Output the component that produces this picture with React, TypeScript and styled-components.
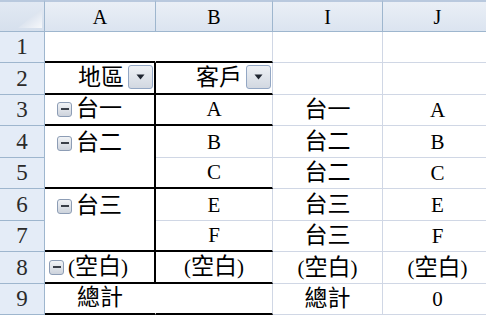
import styled, { createGlobalStyle } from 'styled-components';

const GlobalStyle = createGlobalStyle`
  html, body {
    margin: 0;
    padding: 0;
    background: #ffffff;
    overflow: hidden;
  }
`;

const GRID = '#d0d7e5';
const HEAD_LINE = '#9eb6ce';
const FONT = `'Liberation Serif', 'Noto Sans CJK TC', serif`;

type Line = 'grid' | 'bold' | 'none';

const lineOf = (l: Line) =>
  l === 'bold' ? '2px solid #000000' : l === 'none' ? '1px solid transparent' : `1px solid ${GRID}`;

const Sheet = styled.div`
  display: grid;
  grid-template-columns: 45px 111px 117px 110px 110px;
  grid-template-rows: 32px 31px 32px 31px 32px 31px 32px 31px 32px 31px;
  width: 493px;
  font-family: ${FONT};
  color: #000000;
`;

const Corner = styled.div`
  box-sizing: border-box;
  background: linear-gradient(to bottom, #e2e9f3, #d6e0ed);
  border-top: 2px solid #b9c9de;
  border-right: 1px solid ${HEAD_LINE};
  border-bottom: 1px solid ${HEAD_LINE};
  display: flex;
  justify-content: flex-end;
  align-items: flex-end;
  padding: 0 2px 3px 0;
`;

const ColHead = styled.div`
  box-sizing: border-box;
  background: linear-gradient(to bottom, #eaeff6, #dbe4f0);
  border-top: 2px solid #b9c9de;
  border-right: 1px solid ${HEAD_LINE};
  border-bottom: 1px solid ${HEAD_LINE};
  display: flex;
  align-items: center;
  justify-content: center;
  font-size: 20px;
  padding-top: 1px;
`;

const RowHead = styled.div`
  box-sizing: border-box;
  background: #e4ecf7;
  border-right: 1px solid ${HEAD_LINE};
  border-bottom: 1px solid ${HEAD_LINE};
  display: flex;
  align-items: flex-end;
  justify-content: center;
  font-size: 23px;
  line-height: 24px;
  padding-bottom: 3px;
  color: #2a2a2a;
`;

const Cell = styled.div<{ $align: string; $pl: number; $r: Line; $b: Line; $span: number }>`
  box-sizing: border-box;
  grid-row: span ${(p) => p.$span};
  border-right: ${(p) => lineOf(p.$r)};
  border-bottom: ${(p) => lineOf(p.$b)};
  display: flex;
  justify-content: ${(p) => p.$align};
  align-items: ${(p) => (p.$span > 1 ? 'flex-start' : 'flex-end')};
  padding: ${(p) => (p.$span > 1 ? '5px 0 0' : '0 0 3px')};
  padding-left: ${(p) => p.$pl}px;
  padding-right: ${(p) => (p.$align === 'flex-end' ? 1 : 0)}px;
  font-size: 21px;
  line-height: 24px;
  white-space: nowrap;
  overflow: hidden;
`;

const Label = styled.span`
  display: inline-flex;
  align-items: center;
  gap: 4px;
  height: 24px;
`;

// CJK glyphs in the sheet font fill more of the em box than Noto does
const Han = styled.span`
  font-size: 23px;
`;

const Toggle = styled.span`
  box-sizing: border-box;
  width: 15px;
  height: 15px;
  border: 1px solid #8d9db5;
  border-radius: 3px;
  background: linear-gradient(to bottom, #f1f3f6, #cdd3dc);
  display: inline-flex;
  align-items: center;
  justify-content: center;
  &::after {
    content: '';
    width: 8px;
    height: 2px;
    background: #3a3f48;
  }
`;

const Drop = styled.span`
  box-sizing: border-box;
  width: 25px;
  height: 24px;
  margin-left: 4px;
  margin-bottom: 1px;
  border: 1px solid #93a7c4;
  border-radius: 3px;
  background: linear-gradient(to bottom, #eef1f5, #d2d8e1);
  display: inline-flex;
  align-items: center;
  justify-content: center;
`;

type CellSpec = {
  text?: string;
  toggle?: boolean;
  drop?: boolean;
  align?: 'left' | 'center' | 'right';
  pl?: number;
  r?: Line;
  b?: Line;
  span?: number;
};

const alignMap = { left: 'flex-start', center: 'center', right: 'flex-end' };

const pivot: (CellSpec | null)[][] = [
  [{ r: 'none', b: 'bold' }, { b: 'bold' }],
  [
    { text: '地區', drop: true, align: 'right', r: 'bold', b: 'bold' },
    { text: '客戶', drop: true, align: 'right', b: 'bold' },
  ],
  [
    { text: '台一', toggle: true, pl: 12, r: 'bold', b: 'bold' },
    { text: 'A', align: 'center', b: 'bold' },
  ],
  [
    { text: '台二', toggle: true, pl: 12, r: 'bold', b: 'bold', span: 2 },
    { text: 'B', align: 'center' },
  ],
  [null, { text: 'C', align: 'center', b: 'bold' }],
  [
    { text: '台三', toggle: true, pl: 12, r: 'bold', b: 'bold', span: 2 },
    { text: 'E', align: 'center' },
  ],
  [null, { text: 'F', align: 'center', b: 'bold' }],
  [
    { text: '(空白)', toggle: true, pl: 4, r: 'bold', b: 'bold' },
    { text: '(空白)', align: 'center', b: 'bold' },
  ],
  [
    { text: '總計', align: 'center', r: 'none', b: 'bold' },
    { b: 'bold' },
  ],
];

const copied: [string, string][] = [
  ['', ''],
  ['', ''],
  ['台一', 'A'],
  ['台二', 'B'],
  ['台二', 'C'],
  ['台三', 'E'],
  ['台三', 'F'],
  ['(空白)', '(空白)'],
  ['總計', '0'],
];

const splitHan = (text: string) =>
  text.split(/([\u3000-\u9fff]+)/).map((part, i) =>
    /[\u3000-\u9fff]/.test(part) ? <Han key={i}>{part}</Han> : part
  );

const DropArrow = () => (
  <svg width="9" height="6" viewBox="0 0 9 6">
    <polygon points="0.5,0.5 8.5,0.5 4.5,5.5" fill="#1f2530" />
  </svg>
);

const renderCell = (c: CellSpec, key: string) => (
  <Cell
    key={key}
    $align={alignMap[c.align ?? 'left']}
    $pl={c.pl ?? 0}
    $r={c.r ?? 'grid'}
    $b={c.b ?? 'grid'}
    $span={c.span ?? 1}
  >
    {c.text && (
      <Label>
        {c.toggle && <Toggle />}
        <span>{splitHan(c.text)}</span>
      </Label>
    )}
    {c.drop && (
      <Drop>
        <DropArrow />
      </Drop>
    )}
  </Cell>
);

const App = () => (
  <>
    <GlobalStyle />
    <Sheet>
      <Corner>
        <svg width="24" height="20" viewBox="0 0 24 20">
          <defs>
            <linearGradient id="tri" x1="0" y1="0" x2="1" y2="1">
              <stop offset="0" stopColor="#c4d1e4" />
              <stop offset="1" stopColor="#f6f8fb" />
            </linearGradient>
          </defs>
          <polygon points="24,0 24,20 0,20" fill="url(#tri)" />
        </svg>
      </Corner>
      {['A', 'B', 'I', 'J'].map((h) => (
        <ColHead key={h}>{h}</ColHead>
      ))}
      {pivot.map((row, i) => [
        <RowHead key={`h${i}`}>{i + 1}</RowHead>,
        ...row.map((c, j) => (c ? renderCell(c, `p${i}-${j}`) : null)),
        ...copied[i].map((t, j) =>
          renderCell({ text: t, align: 'center' }, `c${i}-${j}`)
        ),
      ])}
    </Sheet>
  </>
);

export default App;
